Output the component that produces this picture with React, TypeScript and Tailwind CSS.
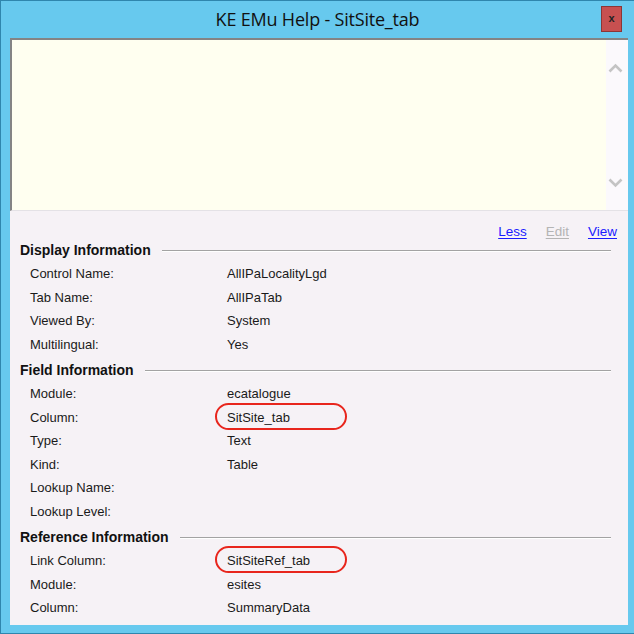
import React from "react";

interface IRow {
    label: string,
    value: string,
    /** Draw a red marker ring round the value */
    circled?: boolean
}

interface ISection {
    title: string,
    rows: IRow[]
}

const sections: ISection[] = [
    {
        title: "Display Information",
        rows: [
            { label: "Control Name:", value: "AllIPaLocalityLgd" },
            { label: "Tab Name:", value: "AllIPaTab" },
            { label: "Viewed By:", value: "System" },
            { label: "Multilingual:", value: "Yes" },
        ]
    },
    {
        title: "Field Information",
        rows: [
            { label: "Module:", value: "ecatalogue" },
            { label: "Column:", value: "SitSite_tab", circled: true },
            { label: "Type:", value: "Text" },
            { label: "Kind:", value: "Table" },
            { label: "Lookup Name:", value: "" },
            { label: "Lookup Level:", value: "" },
        ]
    },
    {
        title: "Reference Information",
        rows: [
            { label: "Link Column:", value: "SitSiteRef_tab", circled: true },
            { label: "Module:", value: "esites" },
            { label: "Column:", value: "SummaryData" },
        ]
    },
];

const Chevron = ({ up }: { up?: boolean }) => (
    <svg width="15" height="10" viewBox="0 0 15 10" className="block">
        <path
            d={up ? "M1.5 8.5 L7.5 2.5 L13.5 8.5" : "M1.5 1.5 L7.5 7.5 L13.5 1.5"}
            fill="none"
            stroke="#c4c4c4"
            strokeWidth="2.6"
        />
    </svg>
);

const Section = ({ section, first }: { section: ISection, first: boolean }) => (
    <div className={first ? "mt-[0.5px]" : "mt-[5.5px]"}>
        <div className="h-[18px] flex items-center pl-[10px] pr-[17px]">
            <span className="font-bold text-[14px] text-[#111] whitespace-nowrap">{section.title}</span>
            <div className="flex-1 ml-[11px] border-t border-[#a3a3a3] border-b border-b-white h-[2px]" />
        </div>
        <div className="pt-[2.5px]">
            {section.rows.map((row, i) => (
                <div key={i} className="h-[23.5px] flex items-center text-[13px] text-[#1a1a1a]">
                    <div className="w-[217px] pl-[20px] whitespace-nowrap">{row.label}</div>
                    <div className="relative whitespace-nowrap">
                        {row.value}
                        {row.circled && (
                            <div className="absolute left-[-12px] top-[-5px] w-[132px] h-[27px] rounded-full border-2 border-[#e8261d]" />
                        )}
                    </div>
                </div>
            ))}
        </div>
    </div>
);

export default function App() {
    return (
        <div
            className="w-[634px] h-[634px] bg-[#67c9ee] border-l border-t border-b border-[#2f86ad] flex flex-col overflow-hidden"
            style={{ fontFamily: '"Liberation Sans", Arial, sans-serif' }}
        >
            {/* title bar */}
            <div className="h-[37px] shrink-0 relative flex items-center justify-center">
                <span className="text-[18px] text-[#111] tracking-[-0.2px]" style={{ fontFamily: '"Open Sans", "Liberation Sans", sans-serif' }}>
                    KE EMu Help - SitSite_tab
                </span>
                <div className="absolute right-[12px] top-[5px] w-[21px] h-[26px] bg-[#c75050] border border-[#8c3636] flex items-center justify-center text-[11px] font-bold text-[#222] leading-none pb-[1px]">
                    x
                </div>
            </div>

            {/* client area */}
            <div className="ml-[9px] mr-[6px] flex-1 flex flex-col bg-[#f6f2f6] mb-[8px]">
                {/* text box */}
                <div className="h-[173px] shrink-0 flex bg-[#fffff0] border-t-2 border-l-2 border-[#848484] border-b border-b-[#e4e2e6]">
                    <div className="flex-1" />
                    <div className="w-[22px] bg-[#fbf9fc] flex flex-col items-center justify-between pt-[23px] pb-[22px] pr-[4px]">
                        <Chevron up />
                        <Chevron />
                    </div>
                </div>

                {/* detail panel */}
                <div className="flex-1 pt-[12px]">
                    <div className="h-[18px] flex items-center justify-end pr-[11px] text-[13.5px] gap-[19px]">
                        <span className="text-[#1a1aff] underline underline-offset-2">Less</span>
                        <span className="text-[#b4b4b4] underline underline-offset-2">Edit</span>
                        <span className="text-[#1a1aff] underline underline-offset-2">View</span>
                    </div>
                    {sections.map((s, i) => (
                        <Section key={i} section={s} first={i === 0} />
                    ))}
                </div>
            </div>
        </div>
    );
}
